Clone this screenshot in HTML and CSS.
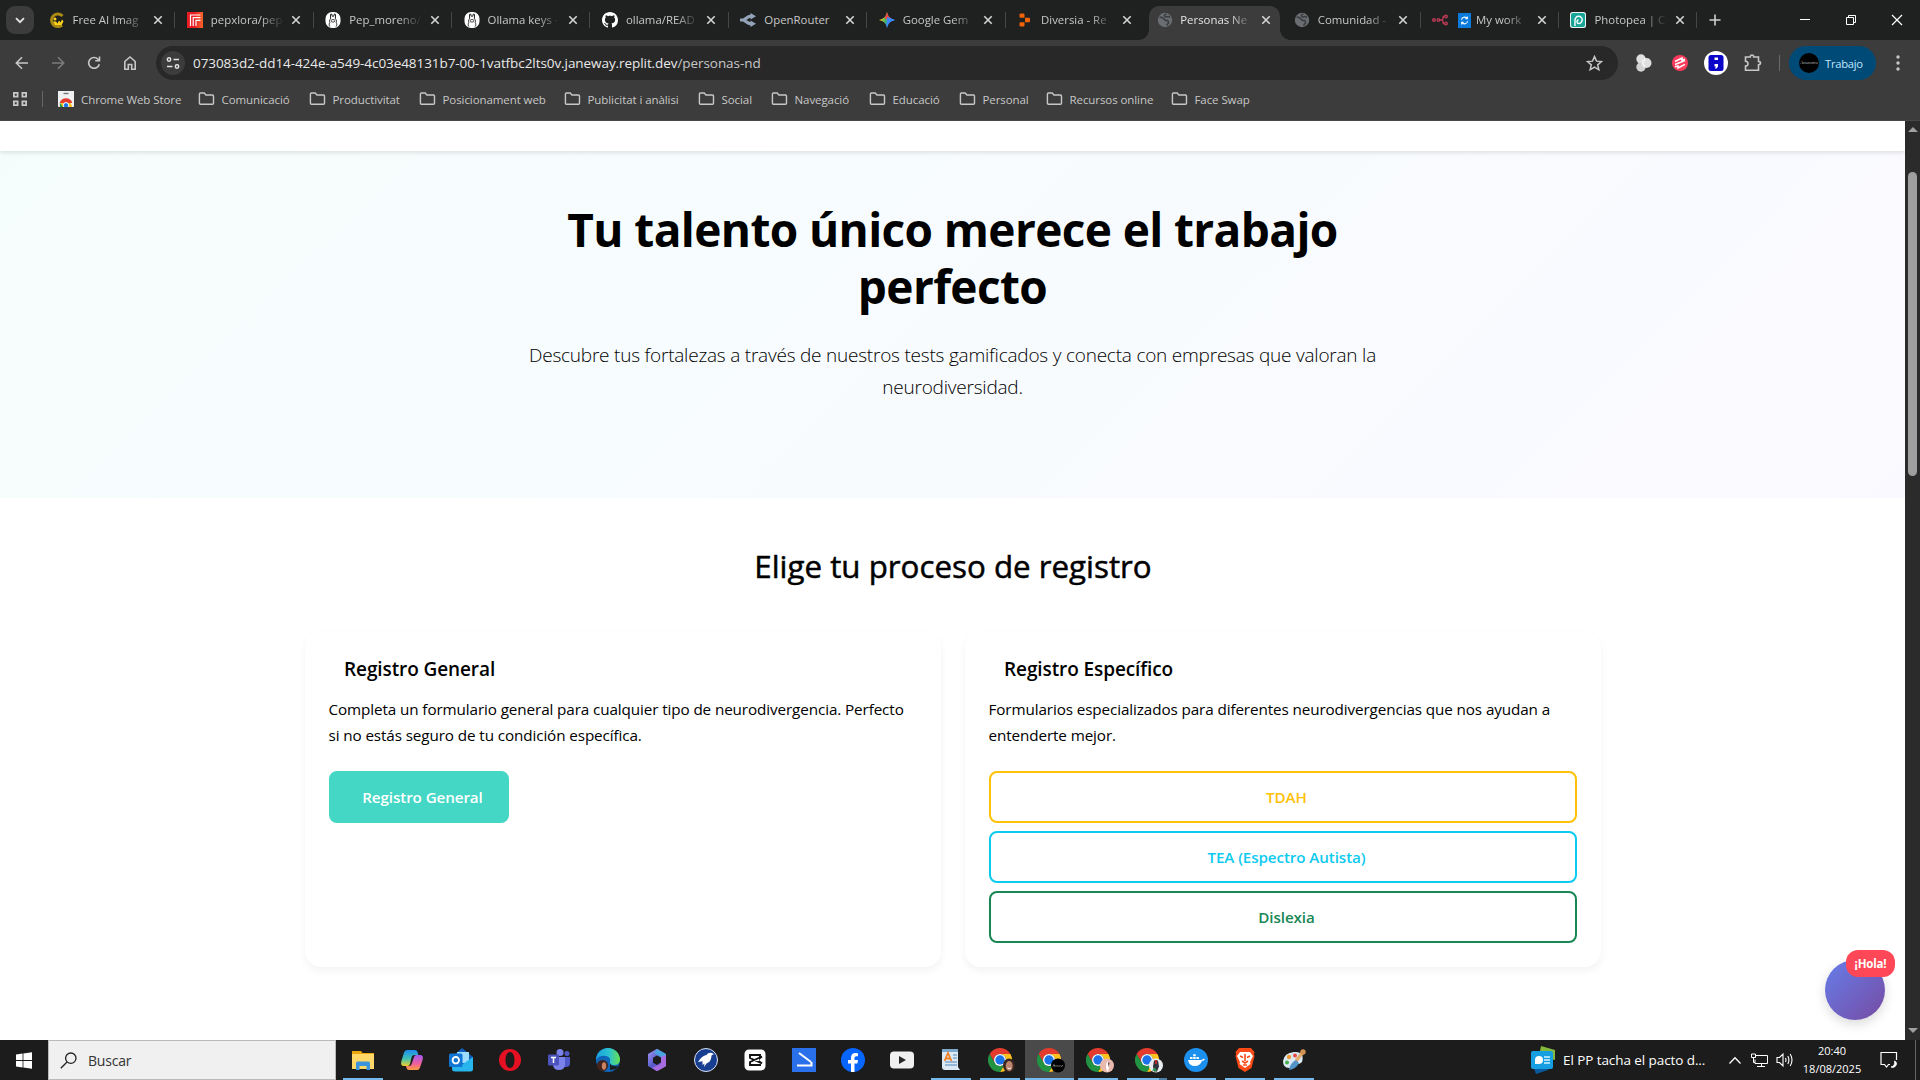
FILE: index.html
```html
<!DOCTYPE html>
<html lang="es">
<head>
<meta charset="utf-8">
<title>Personas Neurodivergentes</title>
<link rel="stylesheet" href="styles.css">
</head>
<body>
<svg class="defs" width="0" height="0" aria-hidden="true">
  <symbol id="close" viewBox="0 0 10 10"><path d="M1.3 1.3l7.4 7.4M8.7 1.3L1.3 8.7" stroke="currentColor" stroke-width="1.6" fill="none"/></symbol>
  <symbol id="folder" viewBox="0 0 18 16"><path d="M1.5 2.8q0-1.1 1.1-1.1h4l1.8 2h6.900q1.100 0 1.100 1.100v7.600q0 1.100-1.100 1.100H2.600q-1.100 0-1.100-1.100z" fill="none" stroke="#c7c7c7" stroke-width="1.5"/></symbol>
  <symbol id="ollama" viewBox="0 0 16 16"><rect x=".5" width="15" height="16" rx="6.500" fill="#fff"/><path d="M4.800 14.500c-.8-1.500-.8-2.800 0-4-.6-1.600-.3-3 .8-3.700L5.500 3q.2-1.500 1.200-.9l.6 2.200q.7-.3 1.400 0l.6-2.200q1-.6 1.200.9l-.1 3.800c1.100.7 1.400 2.100.8 3.700.8 1.200.8 2.500 0 4" fill="none" stroke="#222"/><ellipse cx="8" cy="8.800" rx="1.900" ry="1.300" fill="none" stroke="#222" stroke-width=".8"/></symbol>
  <symbol id="globe" viewBox="0 0 16 16"><circle cx="8" cy="8" r="7.200" fill="#6a6d71"/><path d="M2.500 5q3 0 4.500 2t3 1.500 1.500 2.500l-2 2.500M9.500 2q-2.500.5-2 2t4 .5l1.500 1" fill="none" stroke="#3c3e42" stroke-width="1.700"/></symbol>
  <symbol id="chrome" viewBox="0 0 24 24">
    <path d="M12 6h10.400A12 12 0 0 0 1.600 6l5.200 9A6 6 0 0 1 12 6z" fill="#e33b2e"/>
    <path d="M12 6h10.400A12 12 0 0 0 1.600 6l5.200 9A6 6 0 0 1 12 6z" fill="#fcc31e" transform="rotate(120 12 12)"/>
    <path d="M12 6h10.400A12 12 0 0 0 1.600 6l5.200 9A6 6 0 0 1 12 6z" fill="#229342" transform="rotate(240 12 12)"/>
    <circle cx="12" cy="12" r="6" fill="#fff"/><circle cx="12" cy="12" r="4.700" fill="#1a73e8"/>
  </symbol>
</svg>

<header class="browser">
  <div class="tabstrip">
    <button class="tab-search"><svg width="10" height="7" viewBox="0 0 10 7"><path d="M1 1.200l4 4 4-4" fill="none" stroke="#e3e3e3" stroke-width="1.800"/></svg></button>
    <div class="tabs">
      <div class="tab"><svg class="fav" viewBox="0 0 16 16"><path d="M13.500 4A6.300 6.300 0 1 0 13 13" fill="none" stroke="#a98a12" stroke-width="3"/><path d="M4 9.500h3l1.500 2 1.500-3 1.500 2 1.500-3 1.500 2-2 3.500H6z" fill="#ffd21c"/><circle cx="6" cy="7" r="1.500" fill="#ffd21c"/></svg><span class="tab-title">Free AI Imag</span><svg class="x"><use href="#close"/></svg></div>
      <div class="tab"><svg class="fav" viewBox="0 0 16 16"><defs><linearGradient id="px"><stop offset=".45" stop-color="#e91c24"/><stop offset="1" stop-color="#f5652a"/></linearGradient></defs><path d="M0 0h16v16H0z" fill="url(#px)"/><path d="M3.500 14V3h10M6.200 14V5.700h7.300M9 14V8.400h4.500" fill="none" stroke="#fff" stroke-width="1.200"/></svg><span class="tab-title">pepxlora/pep</span><svg class="x"><use href="#close"/></svg></div>
      <div class="tab"><svg class="fav"><use href="#ollama"/></svg><span class="tab-title">Pep_moreno/</span><svg class="x"><use href="#close"/></svg></div>
      <div class="tab"><svg class="fav"><use href="#ollama"/></svg><span class="tab-title">Ollama keys ·</span><svg class="x"><use href="#close"/></svg></div>
      <div class="tab"><svg class="fav" viewBox="0 0 16 16"><path fill="#fff" d="M8 0C3.580 0 0 3.580 0 8c0 3.540 2.290 6.530 5.470 7.590.4.070.55-.17.55-.38 0-.19-.01-.82-.01-1.490-2.010.37-2.530-.49-2.690-.94-.09-.23-.48-.94-.82-1.130-.28-.15-.68-.52-.01-.53.63-.01 1.080.58 1.230.82.72 1.210 1.870.87 2.330.66.070-.52.28-.87.51-1.070-1.780-.2-3.640-.89-3.640-3.950 0-.87.31-1.590.82-2.150-.08-.2-.36-1.020.08-2.120 0 0 .67-.21 2.200.82.64-.18 1.320-.27 2-.27s1.360.09 2 .27c1.530-1.040 2.200-.82 2.200-.82.44 1.100.16 1.920.08 2.120.51.56.82 1.270.82 2.150 0 3.070-1.870 3.750-3.650 3.950.29.25.54.73.54 1.480 0 1.070-.01 1.930-.01 2.200 0 .21.15.46.55.38A8.010 8.010 0 0 0 16 8c0-4.420-3.580-8-8-8z"/></svg><span class="tab-title">ollama/READ</span><svg class="x"><use href="#close"/></svg></div>
      <div class="tab"><svg class="fav" viewBox="0 0 16 16"><path d="M0 8h2.500c3 0 4-3.800 8.500-3.800M2.500 8c3 0 4 3.800 8.500 3.800" fill="none" stroke="#94a3b8" stroke-width="3.200"/><path d="M10.500 1l5.500 3.200-5.500 3.200zM10.500 8.600l5.500 3.200-5.500 3.200z" fill="#94a3b8"/></svg><span class="tab-title">OpenRouter</span><svg class="x"><use href="#close"/></svg></div>
      <div class="tab"><svg class="fav" viewBox="0 0 16 16"><defs><linearGradient id="gm" x1="0" y1=".4" x2="1" y2=".6"><stop offset=".1" stop-color="#f9c61a"/><stop offset=".42" stop-color="#3cb56a"/><stop offset=".58" stop-color="#3b8bff"/></linearGradient></defs><path d="M8 0q1.200 6.800 8 8-6.800 1.200-8 8-1.200-6.800-8-8 6.800-1.200 8-8z" fill="url(#gm)"/><path d="M8 0q.8 4.500 4 6.500L8 8 5.500 5.500Q7.400 3.500 8 0z" fill="#f0483e"/><path d="M8 5l4 1.500L16 8q-6.800 1.200-8 8z" fill="#3b8bff"/></svg><span class="tab-title">Google Gem</span><svg class="x"><use href="#close"/></svg></div>
      <div class="tab"><svg class="fav" viewBox="0 0 16 16"><path d="M2.500 2.500q0-1 1-1h3q1 0 1 1v3.200h-4q-1 0-1-1zM8 5.700h4q1 0 1 1v2.600q0 1-1 1H8zM2.500 11.300q0-1 1-1h4v3.200q0 1-1 1h-3q-1 0-1-1z" fill="#f26207"/></svg><span class="tab-title">Diversia - Re</span><svg class="x"><use href="#close"/></svg></div>
      <div class="tab active"><svg class="fav"><use href="#globe"/></svg><span class="tab-title">Personas Ne</span><svg class="x"><use href="#close"/></svg></div>
      <div class="tab"><svg class="fav"><use href="#globe"/></svg><span class="tab-title">Comunidad -</span><svg class="x"><use href="#close"/></svg></div>
      <div class="tab"><svg class="fav" viewBox="0 0 16 16"><g fill="none" stroke="#b83a56" stroke-width="1.400"><circle cx="2" cy="8" r="1.300"/><circle cx="6.500" cy="8" r="1.300"/><path d="M8 8h1.500q1.500 0 1.500-2t2-2M9.500 8q1.500 0 1.500 2t2 2"/><circle cx="14" cy="4.500" r="1.300"/><circle cx="14" cy="11.500" r="1.300"/></g></svg><span class="tab-title with-icon"><svg class="sync" viewBox="0 0 13 15"><path d="M0 0h13v15H0z" fill="#0b7bdb"/><path d="M3.500 6.800a3 3 0 0 1 5.500-1.300M9.500 8.200A3 3 0 0 1 4 9.500M9.300 3.500v2.200H7.300M3.700 11.500V9.300h2" fill="none" stroke="#fff" stroke-width="1.100"/></svg>My work</span><svg class="x"><use href="#close"/></svg></div>
      <div class="tab"><svg class="fav" viewBox="0 0 16 16"><rect width="16" height="16" rx="2.500" fill="#e9f6f3"/><rect x="1" y="1" width="14" height="14" rx="2" fill="#18a497"/><path d="M5 14V8a3.600 3.600 0 1 1 3.600 3.500Q7 11.300 7 9.500 7 8 8.500 8" fill="none" stroke="#fff" stroke-width="1.400"/></svg><span class="tab-title">Photopea | C</span><svg class="x"><use href="#close"/></svg></div>
    </div>
    <svg class="newtab" viewBox="0 0 12 12"><path d="M6 .5v11M.5 6h11" stroke="#d0d0d0" stroke-width="1.600"/></svg>
    <div class="window-controls">
      <svg width="12" height="12"><path d="M1 5.500h10" stroke="#fff"/></svg>
      <svg width="12" height="12"><path d="M1.500 3.500h7v7h-7zM3.500 3.500v-2h7v7h-2" fill="none" stroke="#fff"/></svg>
      <svg width="12" height="12"><path d="M1 1l10 10M11 1L1 11" stroke="#fff" stroke-width="1.200"/></svg>
    </div>
  </div>

  <div class="toolbar">
    <div class="nav">
      <svg viewBox="0 0 16 16"><path d="M14 8H2.500M8 2.300L2.300 8 8 13.700" fill="none" stroke="#c7c7c7" stroke-width="1.600"/></svg>
      <svg viewBox="0 0 16 16"><path d="M2 8h11.500M8 2.300L13.700 8 8 13.700" fill="none" stroke="#7b7b7b" stroke-width="1.600"/></svg>
      <svg viewBox="0 0 16 16"><path d="M13.300 9.200A5.400 5.400 0 1 1 12 4.200l1.300 1.300M13.500 1.500v4.300H9.200" fill="none" stroke="#c7c7c7" stroke-width="1.600"/></svg>
      <svg viewBox="0 0 16 16"><path d="M2.800 14.200V6.500L8 2l5.200 4.500v7.700H9.700V9.500H6.300v4.700z" fill="none" stroke="#c7c7c7" stroke-width="1.600"/></svg>
    </div>
    <div class="omnibox">
      <span class="site-info"><svg width="14" height="14" viewBox="0 0 14 14" fill="none" stroke="#e3e3e3" stroke-width="1.500"><circle cx="3" cy="3.500" r="1.700"/><path d="M7.500 3.500H13M1 10.500h5.500"/><circle cx="11" cy="10.500" r="1.700"/></svg></span>
      <span class="url">073083d2-dd14-424e-a549-4c03e48131b7-00-1vatfbc2lts0v.janeway.replit.dev<span class="path">/personas-nd</span></span>
      <svg class="star" viewBox="0 0 16 16"><path d="M8 1.500l1.900 4.300 4.700.4-3.600 3.100 1.100 4.600L8 11.500l-4.100 2.400L5 9.300 1.400 6.200l4.700-.4z" fill="none" stroke="#c7c7c7" stroke-width="1.400"/></svg>
    </div>
    <div class="extensions">
      <svg viewBox="0 0 24 24"><circle cx="9" cy="8" r="4.700" fill="#e0e0e0"/><circle cx="9" cy="16" r="4.700" fill="#d2d2d2"/><circle cx="14.500" cy="12" r="5" fill="#f2f2f2" opacity=".9"/></svg>
      <svg viewBox="0 0 24 24"><circle cx="12" cy="12" r="8" fill="#fb3b5c"/><path d="M7 10.500l7-3.500v2l3-.8M7 13.500l10-4M7 15.800l3-.8v2l7-3.700" fill="none" stroke="#fff" stroke-width="1.500"/></svg>
      <svg viewBox="0 0 24 24"><circle cx="12" cy="12" r="12" fill="#fff"/><rect x="4.500" y="4" width="15" height="16" rx="2.500" fill="#0a05c8"/><path d="M10.500 6.500h3.500v2.500h-3.500zM10.500 13h3.500v2.500l-1.500 2h-1.500l.8-2h-1.300z" fill="#fff"/></svg>
      <svg viewBox="0 0 24 24"><path d="M4.500 6h4.800q0-2 1.700-2t1.700 2h4.800v4.500q2 0 2 1.600t-2 1.600V19.300h-13v-4.200q2.500-.2 2.500-2.400t-2.500-2.400z" fill="none" stroke="#c7c7c7" stroke-width="1.600"/></svg>
    </div>
    <i class="divider"></i>
    <div class="profile"><span class="avatar">Amaranw</span>Trabajo</div>
    <svg class="kebab" viewBox="0 0 4 16" fill="#c7c7c7"><circle cx="2" cy="2" r="1.700"/><circle cx="2" cy="8" r="1.700"/><circle cx="2" cy="14" r="1.700"/></svg>
  </div>

  <nav class="bookmarks">
    <svg class="apps" viewBox="0 0 16 16" fill="none" stroke="#c7c7c7" stroke-width="1.800"><path d="M1.900 1.900h3.700v3.700H1.900zM10.400 1.900h3.700v3.700h-3.700zM1.900 10.400h3.700v3.700H1.900zM10.400 10.400h3.700v3.700h-3.700z"/></svg>
    <i class="bar"></i>
    <span class="bm"><svg viewBox="0 0 16 16"><path d="M0 0h16v15q0 1-1 1H1q-1 0-1-1z" fill="#eef0f2"/><path d="M5.500 2.500h5" stroke="#777" stroke-width="1.400"/><path d="M2 16a6 6 0 0 1 12 0z" fill="#fbc116"/><path d="M1.700 12A6.600 6.600 0 0 1 14.300 12H8z" fill="#e33b2e"/><path d="M1.700 11.500L5 16H2z" fill="#229342"/><circle cx="8" cy="14.300" r="2.700" fill="#1a73e8" stroke="#fff"/></svg>Chrome Web Store</span>
    <span class="bm"><svg><use href="#folder"/></svg>Comunicació</span>
    <span class="bm"><svg><use href="#folder"/></svg>Productivitat</span>
    <span class="bm"><svg><use href="#folder"/></svg>Posicionament web</span>
    <span class="bm"><svg><use href="#folder"/></svg>Publicitat i anàlisi</span>
    <span class="bm"><svg><use href="#folder"/></svg>Social</span>
    <span class="bm"><svg><use href="#folder"/></svg>Navegació</span>
    <span class="bm"><svg><use href="#folder"/></svg>Educació</span>
    <span class="bm"><svg><use href="#folder"/></svg>Personal</span>
    <span class="bm"><svg><use href="#folder"/></svg>Recursos online</span>
    <span class="bm"><svg><use href="#folder"/></svg>Face Swap</span>
  </nav>
</header>

<div class="viewport">
  <main class="page">
    <div class="navbar"></div>
    <section class="hero">
      <h1>Tu talento único merece el trabajo<br>perfecto</h1>
      <p>Descubre tus fortalezas a través de nuestros tests gamificados y conecta con empresas que valoran la<br>neurodiversidad.</p>
    </section>
    <section class="register">
      <h2>Elige tu proceso de registro</h2>
      <div class="cards">
        <article class="card">
          <h3>Registro General</h3>
          <p>Completa un formulario general para cualquier tipo de neurodivergencia. Perfecto<br>si no estás seguro de tu condición específica.</p>
          <a class="btn primary">Registro General</a>
        </article>
        <article class="card">
          <h3>Registro Específico</h3>
          <p>Formularios especializados para diferentes neurodivergencias que nos ayudan a<br>entenderte mejor.</p>
          <div class="stack">
            <a class="btn warning">TDAH</a>
            <a class="btn info">TEA (Espectro Autista)</a>
            <a class="btn success">Dislexia</a>
          </div>
        </article>
      </div>
    </section>
    <div class="chat"><span class="chat-badge">¡Hola!</span></div>
  </main>
  <div class="scrollbar"><i class="up"></i><i class="thumb"></i><i class="down"></i></div>
</div>

<footer class="taskbar">
  <div class="start"><svg width="16" height="17" viewBox="0 0 16 17" fill="#fff"><path d="M0 2.400l6.600-.9v6.600H0zM7.400 1.400L16 .2v7.900H7.400zM0 8.900h6.600v6.600L0 14.600zM7.400 8.900H16v7.900l-8.600-1.200z"/></svg></div>
  <div class="search"><svg width="17" height="17" viewBox="0 0 17 17" fill="none" stroke="#222" stroke-width="1.300"><circle cx="10.800" cy="6.200" r="5.200"/><path d="M7 10L.8 16.200"/></svg>Buscar</div>
  <div class="apps-row">
    <div class="app open"><svg viewBox="0 0 24 24"><path d="M1 3h9l1.500 2H23v16H1z" fill="#e8a50c"/><path d="M1 6h22v15H1z" fill="#ffd768"/><path d="M5 22v-7q0-1.500 1.500-1.500h11q1.500 0 1.500 1.500v7h-3.500v-4h-7v4z" fill="#3c95dc"/></svg></div>
    <div class="app"><svg viewBox="0 0 24 24"><defs><linearGradient id="ca" x1="0" y1="0" x2="0" y2="1"><stop stop-color="#1b8cf0"/><stop offset=".55" stop-color="#3fc2b0"/><stop offset="1" stop-color="#f5cf28"/></linearGradient><linearGradient id="cb" x1="0" y1="0" x2="0" y2="1"><stop stop-color="#a25af0"/><stop offset=".6" stop-color="#f26098"/><stop offset="1" stop-color="#fca03c"/></linearGradient></defs><path d="M7 2h8q2 0 2.500 2l.8 3h-4q-2 0-2.600 2L10 16q-.6 2-2.600 2H4q-4 0-2.600-5L4 4.500Q4.700 2 7 2z" fill="url(#ca)"/><path d="M17 22H9q-2 0-2.500-2l-.5-2h3q2 0 2.600-2L14 9q.6-2 2.600-2H20q4 0 2.600 5L20 19.500Q19.300 22 17 22z" fill="url(#cb)"/></svg></div>
    <div class="app"><svg viewBox="0 0 24 24"><path d="M3 9L13 0l11 9v10q0 3-3 3H6z" fill="#0f5dbd"/><path d="M8 4h12v11H8z" fill="#9bdcff"/><path d="M3 12l11 4L24 9v12q0 2.500-2.500 2.500H6Q3 23.500 3 21z" fill="#28b5ee"/><rect y="5.500" width="13.500" height="13.500" rx="1.500" fill="#1175d4"/><circle cx="6.800" cy="12.200" r="3.200" fill="none" stroke="#fff" stroke-width="1.900"/></svg></div>
    <div class="app"><svg viewBox="0 0 24 24"><path fill-rule="evenodd" d="M12 1a11 11 0 1 0 0 22 11 11 0 0 0 0-22zm0 3c3 0 4.500 4 4.500 8S15 20 12 20s-4.500-4-4.500-8S9 4 12 4z" fill="#e51123"/></svg></div>
    <div class="app"><svg viewBox="0 0 24 24"><circle cx="13" cy="4.500" r="3.500" fill="#7b83eb"/><circle cx="20" cy="5.500" r="2.500" fill="#5059c9"/><path d="M15 9h8v6q0 4-4 4h-4z" fill="#5059c9"/><path d="M6 9h12v7q0 6-6 6t-6-6z" fill="#7b83eb"/><rect x="1" y="6.500" width="11" height="11" rx="1" fill="#4b53bc"/><path d="M4 9.500h5M6.500 9.500V15" stroke="#fff" stroke-width="1.500"/></svg></div>
    <div class="app"><svg viewBox="0 0 24 24"><defs><linearGradient id="ed"><stop stop-color="#199fe0"/><stop offset=".55" stop-color="#2cc3d0"/><stop offset="1" stop-color="#66e04c"/></linearGradient></defs><circle cx="12" cy="12" r="12" fill="#0f65b8"/><path d="M0 12a12 12 0 0 1 24 0q-.5 5-6 5-5 0-4-3 1-5-4-6Q3 7 0 12z" fill="url(#ed)"/><path d="M14 15q1 4 8 3l-2 3-6 1z" fill="#1c1c1c"/><circle cx="6.500" cy="17.500" r="5.500" fill="#40231a"/><ellipse cx="8" cy="18" rx="2.200" ry="3.700" fill="#c98262"/></svg></div>
    <div class="app"><svg viewBox="0 0 24 24"><defs><linearGradient id="m3" x1="0" y1="0" x2="1" y2="1"><stop stop-color="#a99cf5"/><stop offset=".5" stop-color="#5558ca"/><stop offset="1" stop-color="#bd68e0"/></linearGradient></defs><path d="M12 .8l9 5.200v12l-9 5.200-9-5.200V6z" fill="url(#m3)"/><path d="M12 1l9 5v12l-5 2.500V9L9 5z" fill="#4ba4df"/><path d="M16 9l5-2v11l-5 3-4 2-5-3 9-4z" fill="#a96be0"/><path d="M12 7.500l4 2.300v4.500L12 17l-4-2.300V9.800z" fill="#1c1c1c"/></svg></div>
    <div class="app"><svg viewBox="0 0 24 24"><circle cx="12" cy="12" r="11.500" fill="#173e91" stroke="#dce4f5"/><path d="M20 6l-3-1.300q-3-.4-4.500 2.300-5 1-8.500 7l4.500-.8L8.500 17l2-1.500-.5 3.500 2.500-3.500q5-2 5-8z" fill="#fff"/></svg></div>
    <div class="app"><svg viewBox="0 0 24 24"><rect x="1.500" y="1.500" width="21" height="21" rx="4.500" fill="#fff"/><path d="M19 8.500L17 10V7H7v3l12 5.500M19 15.500L17 14v3H7v-3l12-5.500" fill="none" stroke="#111" stroke-width="1.900"/></svg></div>
    <div class="app"><svg viewBox="0 0 24 24"><path d="M0 0h24v24H0z" fill="#2970ea"/><path d="M7 5l12 9M5 17.500h14.500V14" fill="none" stroke="#fff" stroke-width="2"/></svg></div>
    <div class="app"><svg viewBox="0 0 24 24"><circle cx="12" cy="12" r="12" fill="#0866ff"/><path d="M10 24v-8.500H7V12h3V9.800Q10 5 14.500 5q1.300 0 2.500.3v3h-1.500Q13.500 8.200 13.500 10v2H17l-.6 3.500h-2.900V24z" fill="#fff"/></svg></div>
    <div class="app"><svg viewBox="0 0 24 24"><rect y="3.500" width="24" height="17" rx="4" fill="#f0f0f0"/><path d="M9 8l7 4-7 4z" fill="#282828"/></svg></div>
    <div class="app open"><svg viewBox="0 0 24 24"><path d="M3 1h16v18l2 3H6q-3 0-3-3z" fill="#dce9f5"/><path d="M3 1h16v3H3z" fill="#7da8ce"/><path d="M14 7h4M14 10h4M6 14h12M6 17h12" stroke="#4f83b8" stroke-width="1.200"/><path d="M5.500 13L9 5l3.500 8M6.500 10.500h5" fill="none" stroke="#ef8022" stroke-width="1.800"/></svg></div>
    <div class="app open"><svg viewBox="0 0 24 24"><use href="#chrome"/></svg><svg class="who" viewBox="0 0 14 14"><ellipse cx="7" cy="7" rx="6" ry="7" fill="#38251f"/><ellipse cx="7.200" cy="7.500" rx="3.500" ry="5" fill="#bd856b"/><path d="M5.500 9.500q2 1.500 3.500 0" stroke="#fff" fill="none"/></svg></div>
    <div class="app open current"><svg viewBox="0 0 24 24"><use href="#chrome"/></svg><svg class="who" viewBox="0 0 14 14"><circle cx="7" cy="7" r="7" fill="#000"/><path d="M2 8l1-2 1 2 1-1 1 1 1-1 1 1 1-1 1 1 2-1" fill="none" stroke="#aaa" stroke-width=".7"/></svg></div>
    <div class="app open"><svg viewBox="0 0 24 24"><use href="#chrome"/></svg><svg class="who" viewBox="0 0 14 14"><circle cx="7" cy="7" r="7" fill="#eab9ad"/><path d="M7 13q-2-7 .5-10 2 0 2 3L8 13z" fill="#fff"/><path d="M8 4q1.800-1 1.500 1.500l-1 3z" fill="#5c3a35"/></svg></div>
    <div class="app open multi"><svg viewBox="0 0 24 24"><use href="#chrome"/></svg><svg class="who" viewBox="0 0 14 14"><circle cx="7" cy="7" r="7" fill="#e9ecf0"/><path d="M5 2h4l1 6-2 5H5L4 8z" fill="#31333a"/><path d="M7 1.500v4" stroke="#b3292d" stroke-width="2"/><path d="M3 12l3-3 2 4z" fill="#2a9850"/></svg></div>
    <div class="app open"><svg viewBox="0 0 24 24"><circle cx="12" cy="12" r="12" fill="#1d90ee"/><path d="M4 12h14q1-2 3-1-1 2-3 2-2 5-7 5-6 0-7-6zM6 9h2.500v2H6zM9.200 9h2.500v2H9.200zM12.400 9h2.500v2h-2.500zM9.200 6.300h2.500v2H9.200z" fill="#fff"/></svg></div>
    <div class="app open"><svg viewBox="0 0 24 24"><path d="M6 0h12l3.500 4-.5 2 .5 2-3 12L12 24l-6.500-4-3-12L3 6l-.5-2z" fill="#fb4a16"/><path d="M7 4h10l3 4-3 6 .5 2L12 20l-5.500-4 .5-2-3-6z" fill="#fff"/><path d="M7 8l3 1.500M17 8l-3 1.500M12 6v7M9 13l3 2 3-2M10 17h4" stroke="#fb4a16" stroke-width="1.600" fill="none"/></svg></div>
    <div class="app open"><svg viewBox="0 0 24 24"><path d="M12 4Q2 5 1 13q0 7 6 7 3 0 3-2t3-2q4 1 7-2 3-11-8-10z" fill="#dceaf5"/><circle cx="7" cy="9" r="2.200" fill="#ef9a38"/><circle cx="13" cy="7.500" r="2" fill="#e54b41"/><circle cx="5" cy="14.500" r="2" fill="#49ad4b"/><path d="M14 13l7-9" stroke="#e7ad6f" stroke-width="3.500"/><circle cx="21" cy="4" r="2.700" fill="#d39250"/><path d="M7 22q1-7 7-10l3 3q-3 6-10 7z" fill="#5594c6"/></svg></div>
  </div>
  <div class="news"><svg width="24" height="28" viewBox="0 0 24 28"><path d="M10 0l14 4v10L8 10z" fill="#86b83c"/><path d="M1 17h19l-3 7-12 4z" fill="#095a9d"/><rect y="5" width="22" height="18" rx="2" fill="#169fe0"/><path d="M13 11h6M13 14h6M13 17h6" stroke="#d3f4ff" stroke-width="1.500"/><circle cx="8" cy="14" r="4" fill="#fff"/><path d="M4 14v4h4z" fill="#fff"/></svg><span>El PP tacha el pacto d...</span></div>
  <div class="tray">
    <svg width="14" height="9" viewBox="0 0 14 9"><path d="M1.500 7.500L7 1.800l5.500 5.700" fill="none" stroke="#fff" stroke-width="1.300"/></svg>
    <svg width="17" height="15" viewBox="0 0 17 15" fill="none" stroke="#fff"><path d="M5 2.500h11.500v8H4v-4M6 13.500h8M10.500 10.500v3M.5 1h4v3.500h-4zM2.500 4.500v5H4"/></svg>
    <svg width="18" height="16" viewBox="0 0 18 16" fill="none" stroke="#fff" stroke-width="1.100"><path d="M1 5.500h2.500L7 2v12l-3.500-3.500H1zM9.500 6q1 2 0 4M11.800 4q2.200 4 0 8M14.200 2q3.600 6 0 12"/></svg>
  </div>
  <div class="clock"><span>20:40</span><span>18/08/2025</span></div>
  <svg class="notif" width="18" height="18" viewBox="0 0 18 18"><path d="M10 13.500H8.500l-2 2.500-2-2.500H1V1.500h15.500V9" fill="none" stroke="#fff" stroke-width="1.200"/><path d="M14.500 10q3 1 1.500 4.500-2 3-5 1.500 4.500-1 3.500-6z" fill="#fff" stroke="#fff" stroke-width=".8"/></svg>
  <i class="peek"></i>
</footer>
</body>
</html>
```
FILE: styles.css
```css
* { box-sizing: border-box; }
html, body { margin: 0; height: 100%; overflow: hidden; }
body {
  display: flex; flex-direction: column;
  width: 1920px; height: 1080px;
  font-family: "Open Sans", "Noto Sans", sans-serif;
  background: #fff; color: #000;
}
.defs { position: absolute; }
svg { display: block; flex: none; }
h1, h2, h3, p { margin: 0; }

/* Browser chrome */
.browser { height: 121px; background: #3c3c3c; border-bottom: 1px solid #484848; flex: none; }
.tabstrip { display: flex; height: 40px; background: #1f2120; align-items: flex-start; }
.tab-search { width: 28px; height: 28px; margin: 6px 4px 0 6px; padding: 0; border: 0; border-radius: 9px; background: #3c3c3c; display: grid; place-items: center; }
.tabs { display: flex; width: 1660.300px; }
.tab { flex: 0 0 138.360px; height: 40px; padding-left: 10.500px; display: flex; align-items: center; color: #c7c7c7; font-size: 11.400px; background: linear-gradient(#444746, #444746) right 1px top 12px / 1px 16px no-repeat; }
.fav { width: 16px; height: 16px; margin-right: 8px; }
.tab-title { flex: none; width: 73px; height: 20px; line-height: 20px; display: flex; align-items: center; white-space: nowrap; overflow: hidden; -webkit-mask-image: linear-gradient(90deg, #000 68%, transparent 100%); mask-image: linear-gradient(90deg, #000 68%, transparent 100%); }
.tab:nth-child(6) .tab-title { -webkit-mask-image: none; mask-image: none; }
.with-icon { padding-left: 2px; }
.sync { width: 13px; height: 15px; margin: 0 5px 0 0; }
.x { width: 10px; height: 10px; margin-left: 7.500px; color: #d5d5d5; }
.tab.active { flex: 0 0 131px; height: 34px; margin: 6px 3px 0 4.360px; padding: 0 0 6px 8px; border-radius: 10px 10px 0 0; background: #3c3c3c; color: #e3e3e3; position: relative; }
.tab.active::before, .tab.active::after { content: ""; position: absolute; bottom: 0; width: 10px; height: 10px; }
.tab.active::before { left: -10px; background: radial-gradient(circle at 0 0, transparent 9.500px, #3c3c3c 10px); }
.tab.active::after { right: -10px; background: radial-gradient(circle at 100% 0, transparent 9.500px, #3c3c3c 10px); }
.tab.active .tab-title { margin-left: -1px; }
.tab:nth-child(8) { background: none; }
.newtab { width: 12px; height: 12px; margin: 14px 0 0 10.700px; }
.window-controls { margin: 14px 17px 0 auto; display: flex; gap: 34px; }

.toolbar { display: flex; align-items: center; height: 46px; }
.nav { display: flex; gap: 20px; padding-left: 14px; width: 156px; }
.nav svg { width: 16px; height: 16px; }
.omnibox { display: flex; align-items: center; width: 1462px; height: 34px; border-radius: 17px; background: #282828; padding: 0 15px 0 5px; }
.site-info { width: 24px; height: 24px; border-radius: 50%; background: #3c3c3c; display: grid; place-items: center; margin-right: 8px; }
.url { font-size: 13.500px; letter-spacing: -.07px; color: #e9e9e9; white-space: nowrap; }
.path { color: #c7c7c7; }
.star { width: 17px; height: 17px; margin-left: auto; }
.extensions { display: flex; gap: 12px; margin-left: 14px; }
.extensions svg { width: 24px; height: 24px; }
.extensions svg:last-child { margin: 0 -1px 0 1px; }
.divider { width: 1px; height: 16px; background: #6a6a6a; margin: 0 9px 0 15px; }
.profile { width: 87px; height: 34px; border-radius: 17px; background: #004a77; color: #c2e7ff; display: flex; align-items: center; font-size: 11.200px; padding-left: 10px; gap: 6px; letter-spacing: -.25px; }
.avatar { width: 20px; height: 20px; border-radius: 50%; background: #000; color: #aaa; font: italic 5px/20px "Liberation Serif", serif; text-align: center; overflow: hidden; letter-spacing: -.2px; }
.kebab { width: 4px; height: 16px; margin-left: 20px; }

.bookmarks { display: grid; grid-template-columns: 29px 17px 140px 111px 110px 145px 134px 73px 98px 90px 87px 125px 100px; padding-left: 12px; height: 34px; align-items: center; margin-top: -4px; }
.apps { width: 16px; height: 16px; }
.bar { width: 1px; height: 16px; background: #666; margin-left: 1px; }
.bm { display: flex; align-items: center; gap: 6.500px; font-size: 11.500px; letter-spacing: -.08px; color: #c7c7c7; white-space: nowrap; }
.bm svg { width: 17px; height: 16px; }
.bm:nth-child(3) { gap: 7px; }
.bm:nth-child(3) svg { width: 16px; }

/* Web page */
.viewport { display: flex; height: 919px; flex: none; }
.page { flex: 1; display: flex; flex-direction: column; position: relative; background: #fff; }
.navbar { height: 30px; background: #fff; box-shadow: 0 2px 4px rgba(0, 0, 0, .1); position: relative; flex: none; }
.hero { height: 347px; padding-top: 49.500px; text-align: center; background: linear-gradient(135deg, #f5fdfc 0%, #faf9ff 100%); flex: none; }
.hero h1 { font-size: 46px; letter-spacing: -.620px; line-height: 57.600px; font-weight: 700; }
.hero p { margin-top: 23.500px; font-size: 19px; letter-spacing: -.217px; line-height: 32px; font-weight: 300; color: #000; }
.register { padding: 49px 304px 0 305px; }
.register h2 { font-size: 31.300px; font-weight: 500; line-height: 38px; text-align: center; -webkit-text-stroke: .5px #000; }
.cards { margin-top: 47px; display: grid; grid-template-columns: 636px 636px; gap: 24px; }
.card { height: 335px; padding: 25px 24px 24px; border-radius: 16px; background: #fff; box-shadow: 0 4px 8px rgba(0, 0, 0, .05); }
.card h3 { padding-left: 15px; font-size: 19px; letter-spacing: -.1px; line-height: 24px; font-weight: 600; }
.card p { margin: 16px 0 23px -.5px; font-size: 15.250px; letter-spacing: -.11px; line-height: 25.600px; white-space: nowrap; }
.stack { display: flex; flex-direction: column; gap: 8px; }
.btn { display: flex; align-items: center; justify-content: center; height: 52px; border: 2px solid; border-radius: 8px; padding-left: 7px; font-size: 15.200px; letter-spacing: -.1px; font-weight: 600; }
.primary { width: 180px; background: #44d7c5; border-color: #44d7c5; color: #fff; }
.warning { color: #ffc107; }
.info { color: #0dcaf0; }
.success { color: #198754; }
.chat { position: absolute; left: 1825px; top: 839px; width: 60px; height: 60px; border-radius: 50%; background: linear-gradient(135deg, #667eea, #764ba2); box-shadow: 0 4px 12px rgba(0, 0, 0, .15); }
.chat-badge { position: absolute; left: 21px; top: -10px; width: 49px; height: 27px; border-radius: 12px; background: #ff4757; color: #fff; font-size: 11.500px; font-weight: 700; line-height: 27px; text-align: center; letter-spacing: -.2px; }
.scrollbar { width: 15px; background: #2b2b2b; display: flex; flex-direction: column; align-items: center; }
.up { border: 5px solid transparent; border-top: 0; border-bottom: 5px solid #a0a0a0; margin-top: 6px; }
.thumb { width: 9px; height: 304px; margin-top: 40px; border-radius: 5px; background: #9f9f9f; }
.down { border: 5px solid transparent; border-bottom: 0; border-top: 5px solid #a0a0a0; margin: auto 0 7px; }

/* Taskbar */
.taskbar { height: 40px; background: #1c1c1c; display: flex; color: #fff; flex: none; align-items: center; }
.start { width: 48px; display: grid; place-items: center; }
.search { width: 288px; height: 40px; background: #f0f0f0; border: 1px solid #bababa; display: flex; align-items: center; gap: 11px; padding-left: 11px; color: #333; font-size: 14px; letter-spacing: -.2px; }
.apps-row { display: flex; width: 981px; height: 40px; margin-left: 2px; }
.app { flex: 1; display: grid; place-items: center; position: relative; }
.app > svg:first-child { width: 24px; height: 24px; }
.app .who { position: absolute; width: 14px; height: 15px; left: 26px; top: 18px; }
.open { background: linear-gradient(#76b9ed, #76b9ed) center bottom / 40px 2px no-repeat; }
.current { background: linear-gradient(#76b9ed, #76b9ed) center bottom / 100% 2px no-repeat #4a4a4a; }
.multi { background: linear-gradient(90deg, #76b9ed 80%, #4d7ea6 80%) center bottom / 40px 2px no-repeat; }
.news { display: flex; align-items: center; gap: 8px; width: 177px; margin-left: 212px; font-size: 13.500px; letter-spacing: -.08px; white-space: nowrap; }
.tray { display: flex; align-items: center; gap: 8px; margin-left: 20px; }
.tray svg:first-child { margin-right: 1px; }
.clock { width: 72px; margin-left: 2px; display: flex; flex-direction: column; align-items: center; font-size: 11px; line-height: 18px; }
.notif { margin-left: 12px; }
.peek { width: 1px; height: 40px; background: #666; margin: 0 4px 0 auto; }
```
